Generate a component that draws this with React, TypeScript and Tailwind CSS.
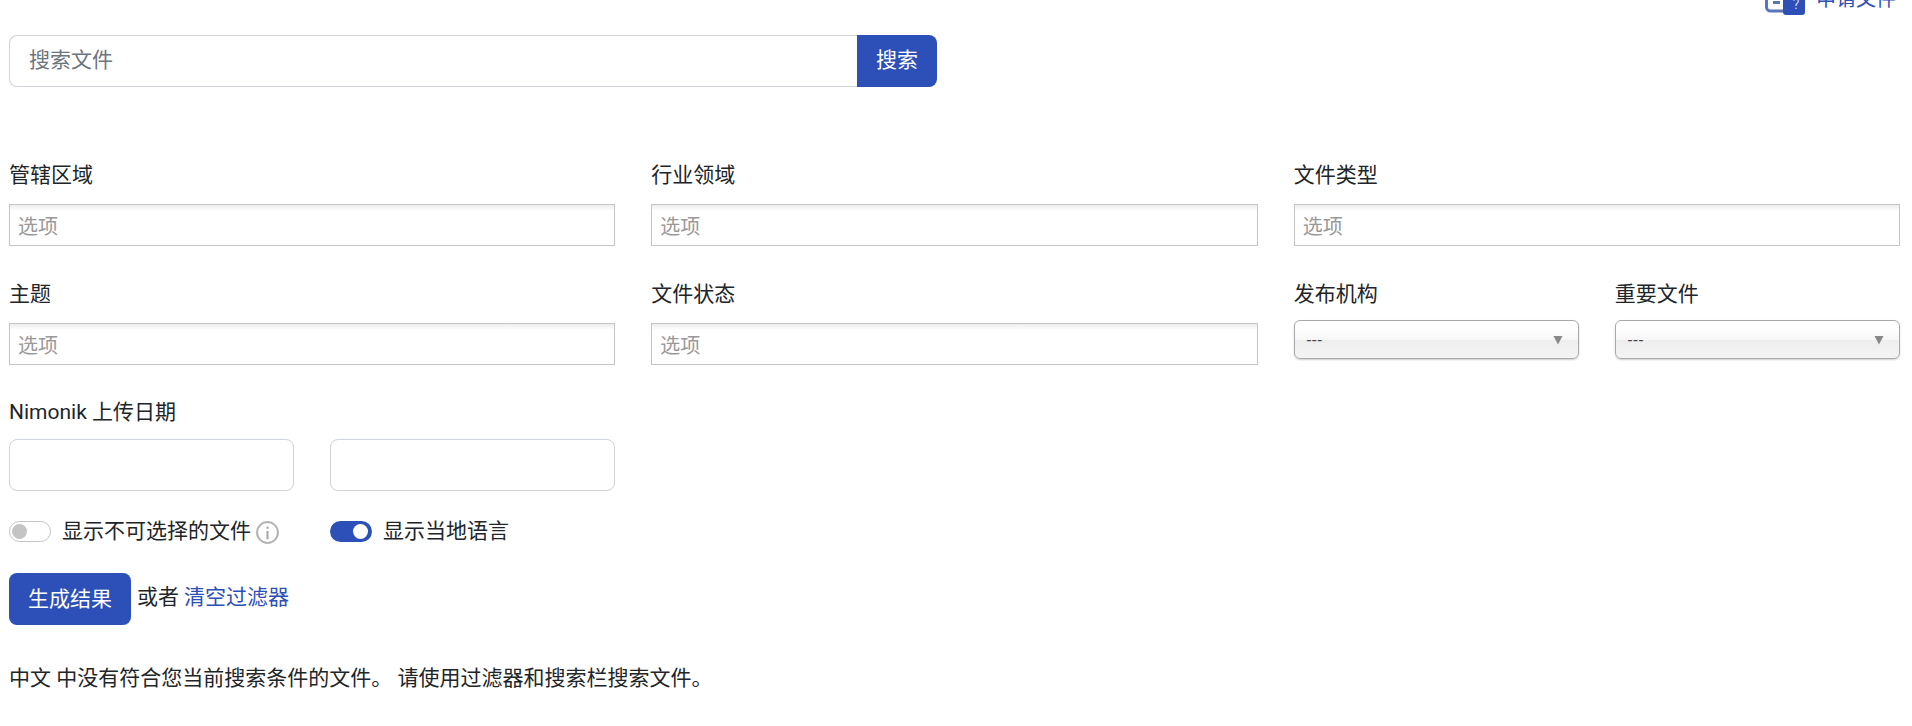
const field = "h-[52px] w-full rounded-lg border border-[#ced4da] bg-white px-4 text-[21px] outline-none";

function TagInput() {
  return (
    <input
      placeholder="选项"
      className="h-[42px] w-full border border-[#c4c4c4] bg-gradient-to-b from-[#eeeeee] from-[1%] to-white to-[15%] px-2 pt-[4px] text-[20px] outline-none placeholder:text-[#999999]"
    />
  );
}

function DropDown() {
  return (
    <div className="flex h-[39px] w-full items-center justify-between rounded-[6px] border border-[#aaaaaa] bg-[linear-gradient(#ffffff_20%,#f6f6f6_50%,#eeeeee_52%,#f4f4f4_100%)] pl-3 pr-[15px] shadow-[0_1px_2px_rgba(0,0,0,0.2)]">
      <span className="mt-[2px] text-base tracking-[1px] text-[#444444]">---</span>
      <svg width="10" height="10" viewBox="0 0 10 10"><path d="M0.5 1h9L5 9.5z" fill="#888888" /></svg>
    </div>
  );
}

function Label({ children }: { children: string }) {
  return <div className="mb-[13px] h-[32px] text-[21px] leading-[32px] text-[#212529]">{children}</div>;
}

export default function App() {
  return (
    <div className="h-[726px] overflow-hidden bg-white pl-[9px] pr-3 font-['Roboto','Noto_Sans_CJK_SC',sans-serif] text-[#212529]">
      <div className="flex h-[18px] items-end justify-end overflow-hidden pr-[4px]">
        <a className="flex items-end gap-[11px] text-[20px] leading-[32px] text-[#2c50b8]">
          <svg width="40" height="30" viewBox="0 0 40 30" className="mb-[3px]">
            <rect x="1.5" y="6" width="26" height="20" rx="4" fill="#fff" stroke="#5a75b8" strokeWidth="3" />
            <rect x="8" y="16" width="7" height="3" fill="#5a75b8" />
            <rect x="18" y="4" width="22" height="26" rx="3" fill="#2c50b8" />
            <text x="31" y="24" textAnchor="middle" fontSize="14" fill="#c9d3ee">?</text>
          </svg>
          <span className="mb-[3px]">申请文件</span>
        </a>
      </div>

      <div className="mt-[17px] flex h-[52px] w-[928px]">
        <input
          placeholder="搜索文件"
          className="h-full flex-1 rounded-l-lg border border-r-0 border-[#ced4da] bg-white px-[19px] pb-[2px] text-[21px] outline-none placeholder:text-[#6c757d]"
        />
        <button className="h-full w-20 rounded-r-lg bg-[#2c50b8] text-[21px] text-white">搜索</button>
      </div>

      <div className="mt-[72px] grid grid-cols-3 gap-x-9 gap-y-[32px]">
        <div>
          <Label>管辖区域</Label>
          <TagInput />
        </div>
        <div>
          <Label>行业领域</Label>
          <TagInput />
        </div>
        <div>
          <Label>文件类型</Label>
          <TagInput />
        </div>
        <div>
          <Label>主题</Label>
          <TagInput />
        </div>
        <div>
          <Label>文件状态</Label>
          <TagInput />
        </div>
        <div className="grid grid-cols-2 gap-x-9">
          <div>
            <div className="mb-[10px] h-[32px] text-[21px] leading-[32px]">发布机构</div>
            <DropDown />
          </div>
          <div>
            <div className="mb-[10px] h-[32px] text-[21px] leading-[32px]">重要文件</div>
            <DropDown />
          </div>
        </div>
      </div>

      <div className="mt-[31px] w-[606px]">
        <div className="mb-[11px] h-[32px] text-[21px] leading-[32px]">Nimonik 上传日期</div>
        <div className="grid grid-cols-2 gap-x-9">
          <input className={field} />
          <input className={field} />
        </div>
        <div className="mt-[26px] grid grid-cols-2 gap-x-9">
          <div className="flex items-center text-[21px] leading-[26px]">
            <span className="flex h-[21px] w-[42px] items-center rounded-full border border-[#c4c4c4] bg-white pl-[2px]">
              <span className="size-[15px] rounded-full bg-[#c4c4c4]" />
            </span>
            <span className="ml-[11px]">显示不可选择的文件</span>
            <svg width="25" height="25" viewBox="0 0 24 24" className="ml-[4px] mt-[3px]">
              <circle cx="12" cy="12" r="10" fill="none" stroke="#b5b5b5" strokeWidth="2" />
              <circle cx="12" cy="7.5" r="1.2" fill="#a8a8a8" />
              <rect x="11" y="10.5" width="2" height="8" fill="#a8a8a8" />
            </svg>
          </div>
          <div className="flex items-center text-[21px] leading-[26px]">
            <span className="flex h-[21px] w-[42px] items-center justify-end rounded-full bg-[#2c50b8] pr-[4px]">
              <span className="size-[15px] rounded-full bg-white" />
            </span>
            <span className="ml-[11px]">显示当地语言</span>
          </div>
        </div>
      </div>

      <div className="mt-[28px] flex items-center text-[21px]">
        <button className="h-[52px] w-[122px] rounded-lg bg-[#2c50b8] pt-[2px] text-white">生成结果</button>
        <span className="ml-[6px] mb-[3px]">或者</span>
        <a className="ml-[5px] mb-[3px] text-[#2c50b8]">清空过滤器</a>
      </div>

      <p className="mt-[37px] text-[21px] leading-[32px]">中文 中没有符合您当前搜索条件的文件。 请使用过滤器和搜索栏搜索文件。</p>
    </div>
  );
}
